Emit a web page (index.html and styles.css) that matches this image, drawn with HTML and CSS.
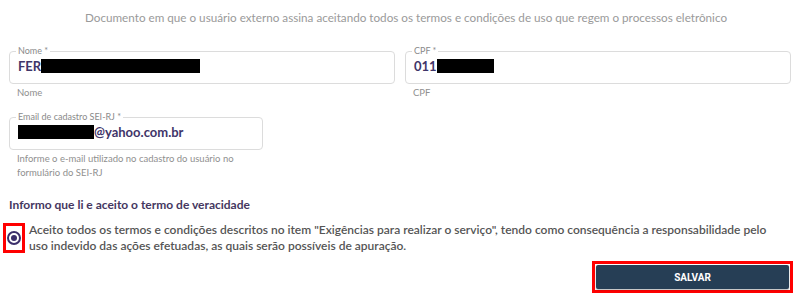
FILE: index.html
```html
<!DOCTYPE html>
<html lang="pt-BR">
<head>
  <meta charset="UTF-8">
  <title>Termo de veracidade</title>
  <link rel="stylesheet" href="styles.css">
</head>
<body>
  <div class="page">
    <p class="intro">Documento em que o usuário externo assina aceitando todos os termos e condições de uso que regem o processos eletrônico</p>

    <div class="fields">
      <div class="field half">
        <fieldset class="box">
          <legend>Nome *</legend>
          <div class="value">FER<span class="redact w-name"></span></div>
        </fieldset>
        <div class="helper">Nome</div>
      </div>
      <div class="field half">
        <fieldset class="box">
          <legend>CPF *</legend>
          <div class="value">011<span class="redact w-cpf"></span></div>
        </fieldset>
        <div class="helper">CPF</div>
      </div>
      <div class="field third">
        <fieldset class="box">
          <legend>Email de cadastro SEI-RJ *</legend>
          <div class="value"><span class="redact w-mail"></span>@yahoo.com.br</div>
        </fieldset>
        <div class="helper">Informe o e-mail utilizado no cadastro do usuário no formulário do SEI-RJ</div>
      </div>
    </div>

    <h4 class="terms-title">Informo que li e aceito o termo de veracidade</h4>
    <label class="accept">
      <span class="radio-wrap"><span class="radio"></span></span>
      <span class="accept-text">Aceito todos os termos e condições descritos no item "Exigências para realizar o serviço", tendo como consequência a responsabilidade pelo uso indevido das ações efetuadas, as quais serão possíveis de apuração.</span>
    </label>

    <div class="actions">
      <div class="btn-mark"><button class="btn-save">SALVAR</button></div>
    </div>
  </div>
</body>
</html>
```

FILE: styles.css
```css
body {
  margin: 0;
  font-family: "Lato", "Open Sans", sans-serif;
  background: #fff;
  color: #555;
}
.page {
  padding: 0 9px;
}
.intro {
  margin: 0;
  padding-top: 10px;
  padding-left: 12px;
  text-align: center;
  font-size: 11.7px;
  color: #9a9a9a;
  height: 37px;
}
.fields {
  display: grid;
  grid-template-columns: repeat(6, 1fr);
  column-gap: 10px;
}
.half {
  grid-column: span 3;
}
.third {
  grid-column: span 2;
}
.field {
  margin-bottom: 13px;
}
.box {
  margin: 0;
  padding: 0 8px;
  height: 37px;
  box-sizing: border-box;
  border: 1px solid #dcdcdc;
  border-radius: 4px;
  display: flex;
  align-items: center;
}
.box legend {
  font-size: 9px;
  color: #8a8a8a;
  padding: 0 2px;
  margin-left: -2px;
  line-height: 8px;
}
.value {
  font-size: 13px;
  font-weight: bold;
  color: #3f3569;
  display: flex;
  align-items: center;
  margin-top: -6px;
}
.redact {
  display: inline-block;
  background: #000;
  height: 14px;
}
.w-name { width: 159px; }
.w-cpf { width: 57px; }
.w-mail { width: 76px; }
.helper {
  font-size: 9.5px;
  color: #8f8f8f;
  line-height: 14px;
  padding: 2px 8px 0;
  max-width: 240px;
}
.terms-title {
  margin: 4px 0 0;
  font-size: 12px;
  color: #45375f;
  font-weight: bold;
}
.accept {
  display: flex;
  align-items: center;
  gap: 4px;
  margin-left: -6px;
  margin-top: 10px;
}
.radio-wrap {
  flex: none;
  width: 16px;
  height: 24px;
  border: 3px solid #f00;
  display: flex;
  align-items: center;
  justify-content: center;
}
.radio {
  width: 10px;
  height: 10px;
  border: 2px solid #3b2f6b;
  border-radius: 50%;
  position: relative;
}
.radio::after {
  content: "";
  position: absolute;
  left: 2px;
  top: 2px;
  width: 6px;
  height: 6px;
  border-radius: 50%;
  background: #3b2f6b;
}
.accept-text {
  font-size: 12px;
  font-weight: 600;
  line-height: 16px;
  color: #555;
  padding-right: 22px;
}
.actions {
  display: flex;
  justify-content: flex-end;
  margin-top: 7px;
}
.btn-mark {
  border: 3px solid #f00;
  padding: 1px;
  margin-right: -2px;
}
.btn-save {
  display: block;
  width: 193px;
  height: 24px;
  border: none;
  border-radius: 2px;
  background: #263e55;
  color: #fff;
  font-family: "Roboto", "Liberation Sans", sans-serif;
  font-weight: bold;
  font-size: 10px;
  box-shadow: 0 1px 2px rgba(0,0,0,0.3);
}
```
